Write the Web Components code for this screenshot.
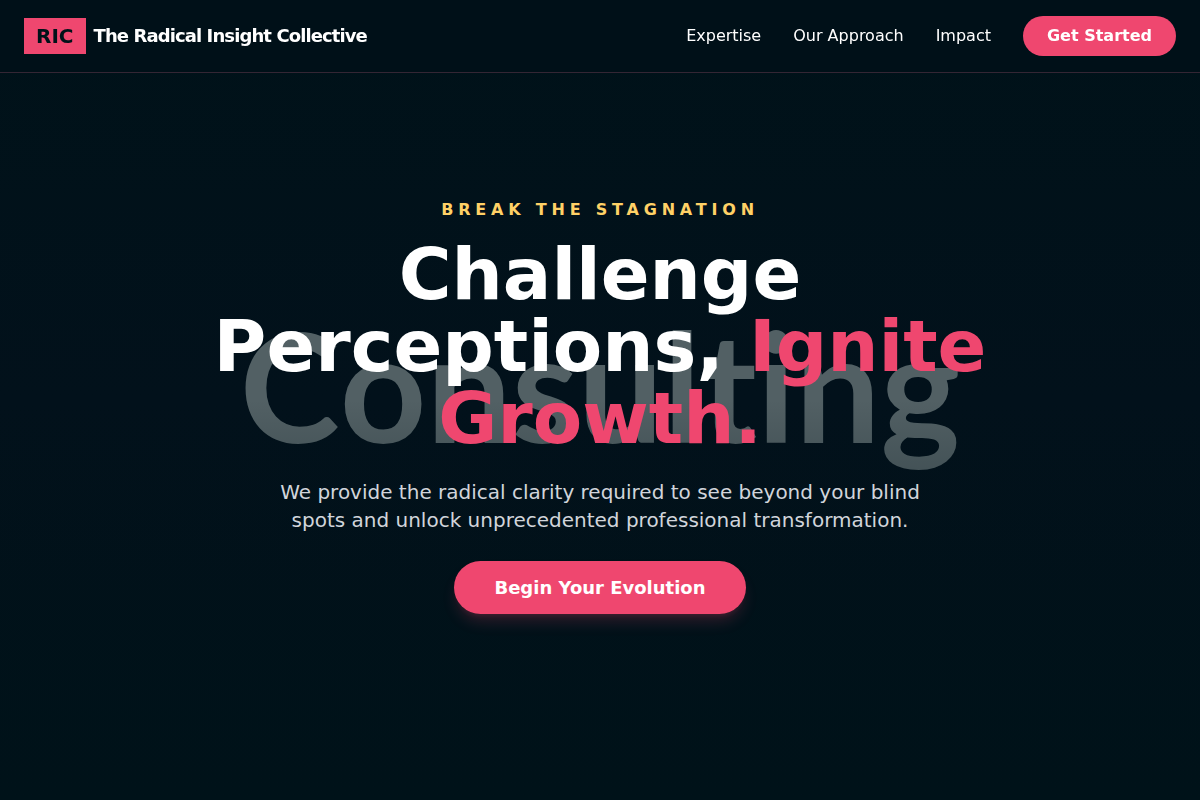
<!DOCTYPE html>
<html lang="en">
<head>
<meta charset="utf-8">
<meta name="viewport" content="width=device-width, initial-scale=1">
<title>The Radical Insight Collective</title>
<style>
  :root { --ink: #001219; --pink: #ef476f; --gold: #ffd166; --mist: #d1d5db; }
  body { margin: 0; background: var(--ink); color: #fff; font: 16px/24px "DejaVu Sans", sans-serif; }
</style>
</head>
<body>
<site-header>
  <brand-mark slot="brand" initials="RIC">The Radical Insight Collective</brand-mark>
  <nav-link href="#expertise">Expertise</nav-link>
  <nav-link href="#approach">Our Approach</nav-link>
  <nav-link href="#impact">Impact</nav-link>
  <pill-link href="#start">Get Started</pill-link>
</site-header>
<main>
  <hero-banner backdrop="Consulting">
    <span slot="eyebrow">Break the Stagnation</span>
    <span slot="title">Challenge Perceptions, </span>
    <span slot="accent">Ignite Growth.</span>
    <span slot="lead">We provide the radical clarity required to see beyond your blind spots and unlock unprecedented professional transformation.</span>
    <pill-link slot="action" size="large" href="#evolve">Begin Your Evolution</pill-link>
  </hero-banner>
</main>
<script>
class BaseElement extends HTMLElement {
  constructor() {
    super();
    this.attachShadow({ mode: "open" });
  }
  connectedCallback() {
    this.shadowRoot.innerHTML = this.render();
  }
}

customElements.define("site-header", class extends BaseElement {
  render() {
    return `<style>
      :host { display: block; position: fixed; top: 0; left: 0; right: 0; z-index: 10;
        background: rgba(0, 17, 24, .9); border-bottom: 1px solid rgba(239, 120, 150, .22); }
      header { display: flex; align-items: center; justify-content: space-between; padding: 16px 24px; }
      nav { display: flex; align-items: center; gap: 32px; }
    </style>
    <header><slot name="brand"></slot><nav><slot></slot></nav></header>`;
  }
});

customElements.define("brand-mark", class extends BaseElement {
  render() {
    return `<style>
      :host { display: block; }
      a { display: flex; align-items: center; gap: 8px; color: #fff; text-decoration: none; font-weight: 700; white-space: nowrap; }
      .box { background: var(--pink); color: var(--ink); padding: 4px 12px; font-size: 20px; line-height: 28px; }
      .name { font-size: 18px; line-height: 28px; letter-spacing: -.05em; }
    </style>
    <a href="#"><span class="box">${this.getAttribute("initials")}</span><span class="name"><slot></slot></span></a>`;
  }
});

customElements.define("nav-link", class extends BaseElement {
  render() {
    return `<style>
      :host { display: block; }
      a { color: #fff; text-decoration: none; white-space: nowrap; }
      a:hover { color: var(--pink); }
    </style>
    <a href="${this.getAttribute("href")}"><slot></slot></a>`;
  }
});

customElements.define("pill-link", class extends BaseElement {
  render() {
    return `<style>
      :host { display: block; }
      a { display: block; padding: 8px 24px; border-radius: 32px; background: var(--pink); color: #fff;
        font-weight: 700; text-decoration: none; white-space: nowrap; }
      :host([size="large"]) { line-height: 28px; }
      :host([size="large"]) a { display: inline; padding: 16px 40px; font-size: 18px;
        box-shadow: 0 10px 15px -3px rgba(239, 71, 111, .2), 0 4px 6px -4px rgba(239, 71, 111, .2); }
    </style>
    <a href="${this.getAttribute("href")}"><slot></slot></a>`;
  }
});

customElements.define("hero-banner", class extends BaseElement {
  render() {
    return `<style>
      :host { display: grid; place-items: center; position: relative; min-height: 100vh; overflow: hidden;
        background: linear-gradient(#001219, #02111b 50%, #001219); }
      .backdrop { position: absolute; inset: 0; display: grid; place-items: center; padding-bottom: 30px;
        font: 700 151px/192px Lato, sans-serif; font-kerning: none; font-variant-ligatures: none; color: #526064; }
      .shade { position: absolute; inset: 0; background: linear-gradient(transparent 50%, var(--ink)); }
      .content { position: relative; box-sizing: border-box; max-width: 896px; padding: 0 24px; text-align: center; }
      .eyebrow { margin: 0 0 16px; color: var(--gold); font-weight: 700; letter-spacing: .3em; text-transform: uppercase; }
      h1 { margin: 0 0 24px; font-size: 72px; line-height: 72px; font-weight: 700; }
      em { font-style: normal; color: var(--pink); }
      .lead { max-width: 672px; margin: 0 auto 40px; color: var(--mist); font-size: 20px; line-height: 28px; }
    </style>
    <div class="backdrop" aria-hidden="true">${this.getAttribute("backdrop")}</div>
    <div class="shade"></div>
    <section class="content">
      <p class="eyebrow"><slot name="eyebrow"></slot></p>
      <h1><slot name="title"></slot> <em><slot name="accent"></slot></em></h1>
      <p class="lead"><slot name="lead"></slot></p>
      <slot name="action"></slot>
    </section>`;
  }
});
</script>
</body>
</html>
